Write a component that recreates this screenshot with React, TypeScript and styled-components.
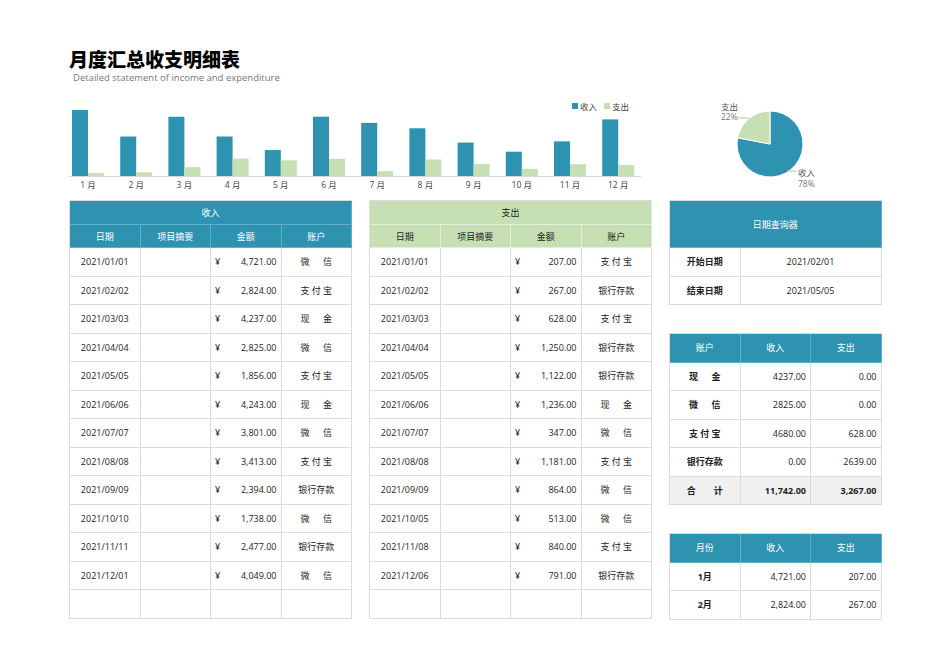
import styled, { createGlobalStyle } from 'styled-components';

const TEAL = '#2e93b0';
const GREEN = '#c6e0b4';
const LINE = '#dcdcdc';

const income = [
  ['2021/01/01', 4721, '微　信'],
  ['2021/02/02', 2824, '支付宝'],
  ['2021/03/03', 4237, '现　金'],
  ['2021/04/04', 2825, '微　信'],
  ['2021/05/05', 1856, '支付宝'],
  ['2021/06/06', 4243, '现　金'],
  ['2021/07/07', 3801, '微　信'],
  ['2021/08/08', 3413, '支付宝'],
  ['2021/09/09', 2394, '银行存款'],
  ['2021/10/10', 1738, '微　信'],
  ['2021/11/11', 2477, '银行存款'],
  ['2021/12/01', 4049, '微　信'],
] as [string, number, string][];

const expense = [
  ['2021/01/01', 207, '支付宝'],
  ['2021/02/02', 267, '银行存款'],
  ['2021/03/03', 628, '支付宝'],
  ['2021/04/04', 1250, '银行存款'],
  ['2021/05/05', 1122, '银行存款'],
  ['2021/06/06', 1236, '现　金'],
  ['2021/07/07', 347, '微　信'],
  ['2021/08/08', 1181, '支付宝'],
  ['2021/09/09', 864, '微　信'],
  ['2021/10/05', 513, '微　信'],
  ['2021/11/08', 840, '支付宝'],
  ['2021/12/06', 791, '银行存款'],
] as [string, number, string][];

const fmt = (n: number) =>
  n.toLocaleString('en-US', { minimumFractionDigits: 2, maximumFractionDigits: 2 });

const GlobalStyle = createGlobalStyle`
  body {
    margin: 0;
    background: #fff;
    font-family: "Open Sans", "Noto Sans CJK SC", sans-serif;
    color: #222;
  }
`;

const Page = styled.div`
  width: 950px;
  height: 672px;
  padding: 46px 0 0 69px;
  box-sizing: border-box;
`;

const Title = styled.h1`
  margin: 0;
  font-size: 19px;
  font-weight: 900;
  line-height: 26px;
  font-family: "Noto Sans CJK SC", sans-serif;
  color: #000;
`;

const Subtitle = styled.div`
  font-size: 9.5px;
  color: #777;
  margin: -1px 0 0 4px;
`;

const Top = styled.div`
  display: flex;
  height: 113px;
  margin-top: 3px;
`;

const Main = styled.div`
  display: flex;
  gap: 17px;
  align-items: flex-start;
`;

const Grid = styled.div<{ $cols: string }>`
  display: grid;
  grid-template-columns: ${(p) => p.$cols};
  border-left: 1px solid ${LINE};
  border-top: 1px solid ${LINE};
  font-size: 9px;
`;

const Cell = styled.div<{ $h?: number; $bg?: string; $color?: string; $bold?: boolean; $span?: number; $justify?: string }>`
  height: ${(p) => p.$h ?? 28.5}px;
  box-sizing: border-box;
  display: flex;
  align-items: center;
  justify-content: ${(p) => p.$justify ?? 'center'};
  padding: 0 4px;
  border-right: 1px solid ${(p) => (p.$bg === TEAL ? '#5fb0c8' : p.$bg === GREEN ? '#e2efd9' : LINE)};
  border-bottom: 1px solid ${(p) => (p.$bg === TEAL ? '#5fb0c8' : p.$bg === GREEN ? '#e2efd9' : LINE)};
  background: ${(p) => p.$bg ?? '#fff'};
  color: ${(p) => p.$color ?? '#222'};
  font-weight: ${(p) => (p.$bold ? 700 : 400)};
  grid-column: span ${(p) => p.$span ?? 1};
  white-space: pre;
`;

const Money = styled(Cell)`
  justify-content: space-between;
`;

function LedgerTable({ title, rows, bg, color }: { title: string; rows: [string, number, string][]; bg: string; color: string }) {
  return (
    <Grid $cols="repeat(4, 70.5px)">
      <Cell $span={4} $h={24} $bg={bg} $color={color}>{title}</Cell>
      {['日期', '项目摘要', '金额', '账户'].map((h) => (
        <Cell key={h} $h={23} $bg={bg} $color={color}>{h}</Cell>
      ))}
      {rows.map(([d, n, a]) => (
        <>
          <Cell key={d}>{d}</Cell>
          <Cell />
          <Money><span>¥</span><span>{fmt(n)}</span></Money>
          <Cell>{a.length === 3 ? a.split('').join(' ') : a}</Cell>
        </>
      ))}
      <Cell /><Cell /><Cell /><Cell />
    </Grid>
  );
}

const Side = styled.div`
  display: flex;
  flex-direction: column;
  gap: 28px;
`;

function BarChart() {
  const max = 4721;
  const H = 66;
  const base = 89;
  const step = 48.2;
  return (
    <svg width={580} height={113} style={{ display: 'block' }}>
      <rect x={503} y={16} width={6} height={6} fill={TEAL} />
      <text x={511} y={22.5} fontSize={8.5} fill="#444">收入</text>
      <rect x={535} y={16} width={6} height={6} fill={GREEN} />
      <text x={543} y={22.5} fontSize={8.5} fill="#444">支出</text>
      {income.map(([, n], i) => {
        const e = expense[i][1];
        const x = 3 + i * step;
        const hi = (n / max) * H;
        const he = (e / max) * H;
        return (
          <g key={i}>
            <rect x={x} y={base - hi} width={16} height={hi} fill={TEAL} />
            <rect x={x + 16} y={base - he} width={16} height={he} fill={GREEN} />
            <text x={x + 16} y={base + 12} fontSize={8.5} fill="#444" textAnchor="middle">{i + 1} 月</text>
          </g>
        );
      })}
      <line x1={0} x2={572} y1={base + 0.5} y2={base + 0.5} stroke="#d8d8d8" />
    </svg>
  );
}

function Pie() {
  const cx = 121, cy = 57, r = 33;
  const a = 0.22 * Math.PI * 2;
  const ex = cx - r * Math.sin(a), ey = cy - r * Math.cos(a);
  return (
    <svg width={220} height={113} style={{ display: 'block' }}>
      <path d={`M${cx} ${cy} L${cx} ${cy - r} A${r} ${r} 0 1 1 ${ex} ${ey} Z`} fill={TEAL} stroke="#fff" strokeWidth={1} />
      <path d={`M${cx} ${cy} L${ex} ${ey} A${r} ${r} 0 0 1 ${cx} ${cy - r} Z`} fill={GREEN} stroke="#fff" strokeWidth={1} />
      <line x1={89} y1={31} x2={100} y2={31} stroke="#bbb" />
      <text x={72} y={23} fontSize={8.5} fill="#555">支出</text>
      <text x={72} y={33} fontSize={8.5} fill="#777">22%</text>
      <line x1={138} y1={84} x2={147} y2={84} stroke="#bbb" />
      <text x={149} y={89} fontSize={8.5} fill="#555">收入</text>
      <text x={149} y={100} fontSize={8.5} fill="#777">78%</text>
    </svg>
  );
}

export default function App() {
  const acc = [
    ['现　金', '4237.00', '0.00'],
    ['微　信', '2825.00', '0.00'],
    ['支付宝', '4680.00', '628.00'],
    ['银行存款', '0.00', '2639.00'],
  ];
  return (
    <Page>
      <GlobalStyle />
      <Title>月度汇总收支明细表</Title>
      <Subtitle>Detailed statement of income and expenditure</Subtitle>
      <Top>
        <BarChart />
        <Pie />
      </Top>
      <Main>
        <LedgerTable title="收入" rows={income} bg={TEAL} color="#fff" />
        <LedgerTable title="支出" rows={expense} bg={GREEN} color="#222" />
        <Side>
          <Grid $cols="70.5px 141px">
            <Cell $span={2} $h={47} $bg={TEAL} $color="#fff">日期查询器</Cell>
            <Cell $bold>开始日期</Cell><Cell>2021/02/01</Cell>
            <Cell $bold>结束日期</Cell><Cell>2021/05/05</Cell>
          </Grid>
          <Grid $cols="repeat(3, 70.5px)">
            {['账户', '收入', '支出'].map((h) => <Cell key={h} $bg={TEAL} $color="#fff">{h}</Cell>)}
            {acc.map(([a, i, e]) => (
              <>
                <Cell key={a} $bold>{a.length === 3 ? a.split('').join(' ') : a}</Cell>
                <Cell $justify="flex-end">{i}</Cell>
                <Cell $justify="flex-end">{e}</Cell>
              </>
            ))}
            <Cell $bold $bg="#f0f0f0">合　　计</Cell>
            <Cell $bold $bg="#f0f0f0" $justify="flex-end">11,742.00</Cell>
            <Cell $bold $bg="#f0f0f0" $justify="flex-end">3,267.00</Cell>
          </Grid>
          <Grid $cols="repeat(3, 70.5px)">
            {['月份', '收入', '支出'].map((h) => <Cell key={h} $bg={TEAL} $color="#fff">{h}</Cell>)}
            <Cell $bold>1月</Cell><Cell $justify="flex-end">4,721.00</Cell><Cell $justify="flex-end">207.00</Cell>
            <Cell $bold>2月</Cell><Cell $justify="flex-end">2,824.00</Cell><Cell $justify="flex-end">267.00</Cell>
          </Grid>
        </Side>
      </Main>
    </Page>
  );
}
